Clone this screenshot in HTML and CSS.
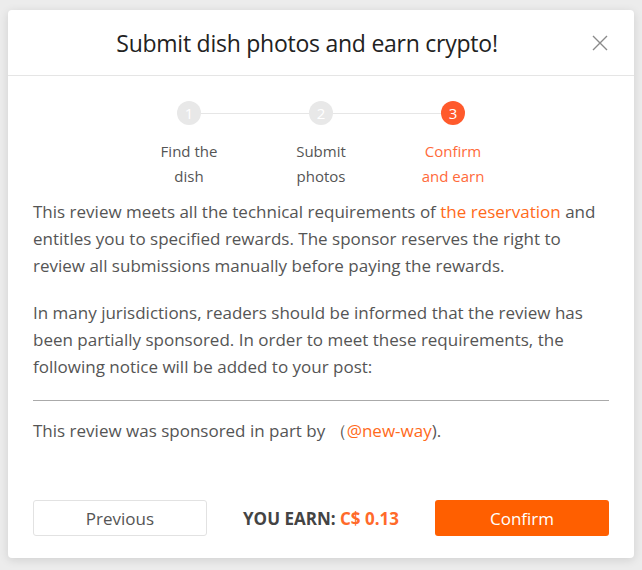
FILE: index.html
```html
<!DOCTYPE html>
<html>
<head>
<meta charset="utf-8">
<link rel="stylesheet" href="styles.css">
</head>
<body>
<div class="modal">
  <div class="header">
    <h1 class="title">Submit dish photos and earn crypto!</h1>
    <svg class="close" width="16" height="16" viewBox="0 0 16 16"><path d="M1 1L15 15M15 1L1 15" stroke="#8a8a8a" stroke-width="1.4" fill="none"/></svg>
  </div>
  <div class="content">
    <div class="steps">
      <div class="step">
        <div class="circle">1</div>
        <div class="label">Find the<br>dish</div>
      </div>
      <div class="step">
        <div class="circle">2</div>
        <div class="label">Submit<br>photos</div>
      </div>
      <div class="step active">
        <div class="circle">3</div>
        <div class="label">Confirm<br>and earn</div>
      </div>
    </div>
    <p class="para">This review meets all the technical requirements of <a class="link">the reservation</a> and entitles you to specified rewards. The sponsor reserves the right to review all submissions manually before paying the rewards.</p>
    <p class="para">In many jurisdictions, readers should be informed that the review has been partially sponsored. In order to meet these requirements, the following notice will be added to your post:</p>
    <hr class="rule">
    <p class="notice">This review was sponsored in part by （<a class="link">@new-way</a>).</p>
  </div>
  <div class="footer">
    <button class="btn prev">Previous</button>
    <div class="earn">YOU EARN: <span class="amount">C$ 0.13</span></div>
    <button class="btn confirm">Confirm</button>
  </div>
</div>
</body>
</html>
```
FILE: styles.css
```css
html, body { margin: 0; padding: 0; }
body {
  background: #ececec;
  font-family: "Open Sans", "Noto Sans", sans-serif;
  width: 642px;
  height: 570px;
  overflow: hidden;
  padding-top: 10px;
  box-sizing: border-box;
}
.modal {
  margin: 0 8px;
  background: #fff;
  border-radius: 4px;
  box-shadow: 0 2px 10px rgba(0,0,0,0.12);
  height: 548px;
  display: flex;
  flex-direction: column;
}
.header {
  position: relative;
  height: 65px;
  border-bottom: 1px solid #e5e5e5;
  display: flex;
  align-items: center;
  justify-content: center;
  padding-right: 28px;
}
.title {
  margin: 0;
  font-size: 23px;
  font-weight: 400;
  color: #222;
  letter-spacing: -0.25px;
}
.close {
  position: absolute;
  right: 26px;
  top: 25px;
}
.content {
  padding: 0 25px;
  flex: 1;
}
.steps {
  display: flex;
  justify-content: center;
  margin-top: 25px;
  position: relative;
}
.step {
  width: 132px;
  display: flex;
  flex-direction: column;
  align-items: center;
  position: relative;
}
.step + .step::before {
  content: "";
  position: absolute;
  top: 12px;
  right: 50%;
  width: 132px;
  height: 1px;
  background: #e6e6e6;
  z-index: 0;
}
.circle {
  width: 24px;
  height: 24px;
  border-radius: 50%;
  background: #e8e8e8;
  color: #fff;
  font-size: 15px;
  line-height: 24px;
  text-align: center;
  position: relative;
  z-index: 1;
}
.label {
  margin-top: 14px;
  font-size: 15px;
  line-height: 25px;
  color: #555;
  text-align: center;
}
.active .circle { background: #ff5a2c; }
.active .label { color: #ff6a3a; }
.para {
  margin: 0 0 20px;
  font-size: 17px;
  line-height: 27px;
  color: #555;
}
.steps + .para { margin-top: 9px; }
.link { color: #ff6a1a; }
.rule {
  border: 0;
  border-top: 1px solid #aaa;
  margin: 0;
}
.notice {
  margin: 16px 0 0;
  font-size: 17px;
  line-height: 27px;
  color: #555;
}
.footer {
  display: flex;
  align-items: center;
  justify-content: space-between;
  padding: 0 25px 22px;
}
.btn {
  width: 174px;
  height: 36px;
  border-radius: 3px;
  font-family: inherit;
  font-size: 17px;
}
.prev {
  background: #fff;
  border: 1px solid #e2e2e2;
  color: #555;
}
.confirm {
  background: #ff5f00;
  border: 0;
  color: #fff;
}
.earn {
  font-size: 17px;
  font-weight: 700;
  color: #444;
}
.amount { color: #ff6a2a; }
```
